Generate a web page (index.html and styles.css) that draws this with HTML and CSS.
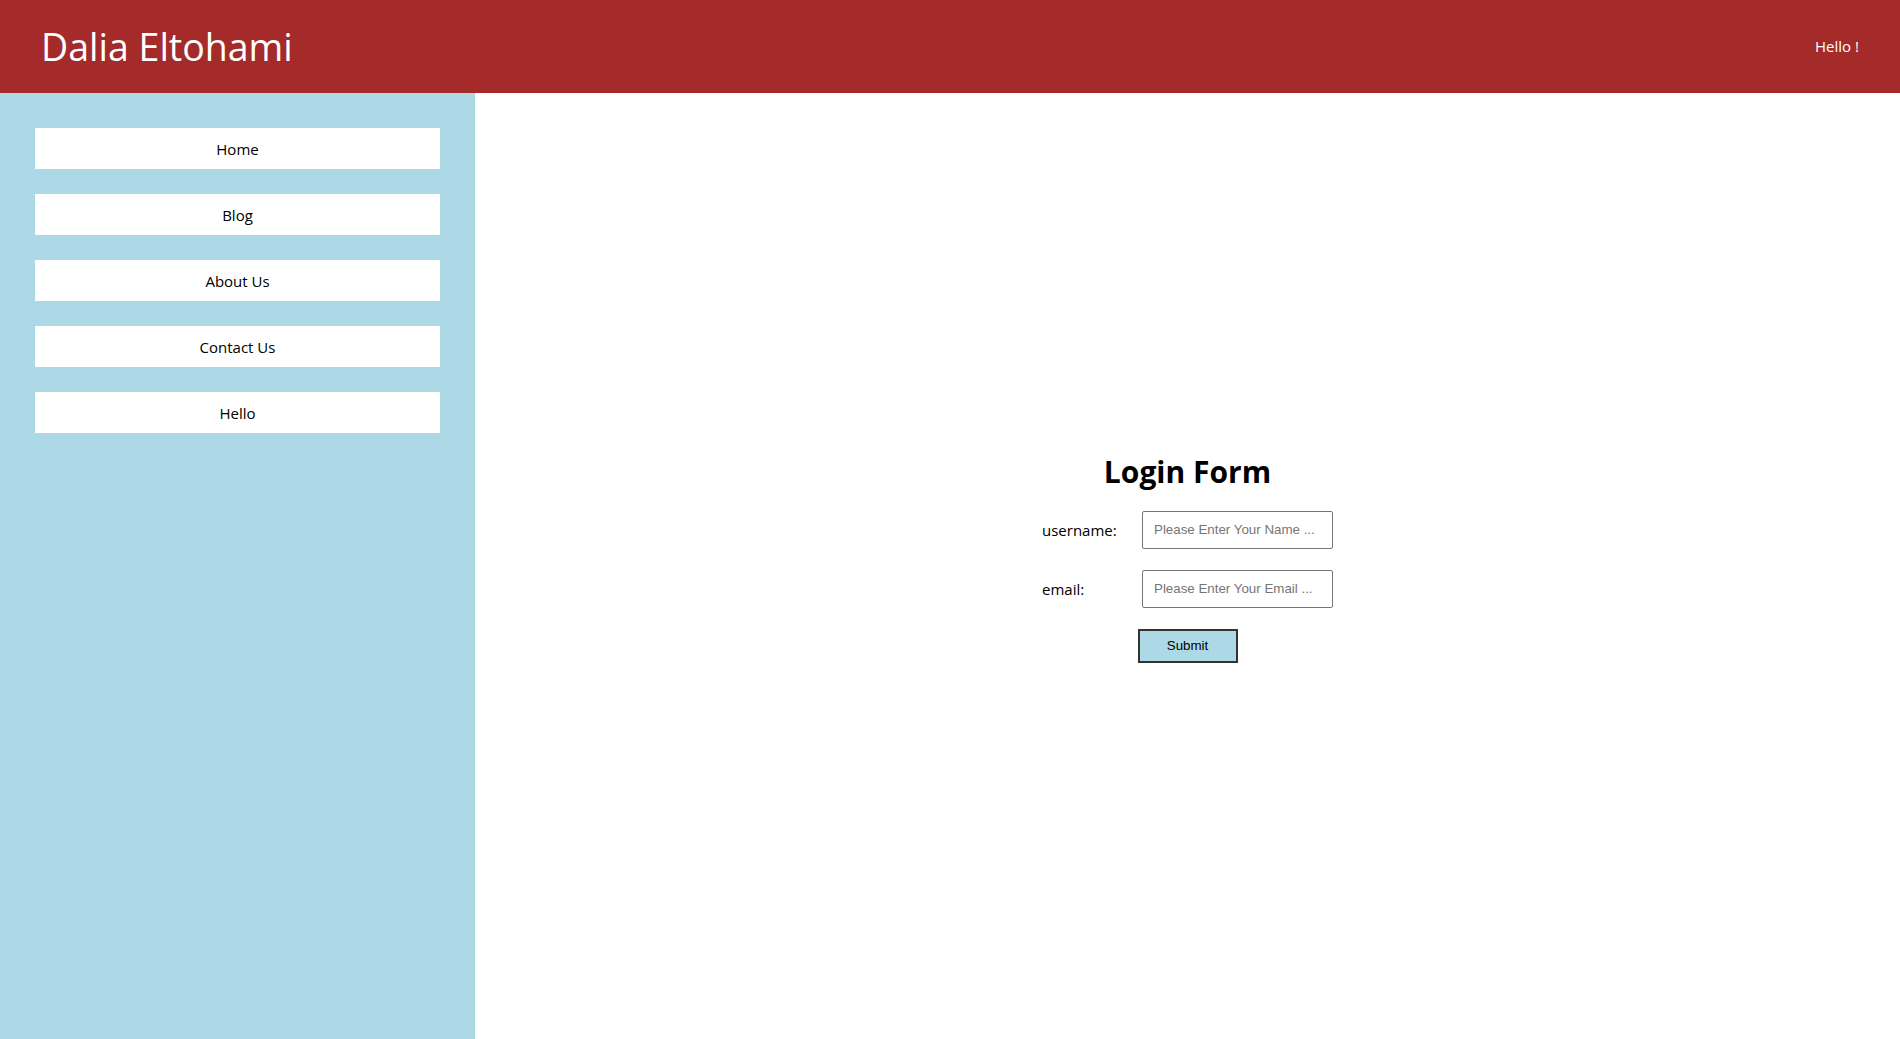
FILE: index.html
```html
<!DOCTYPE html>
<html>
<head>
<meta charset="utf-8">
<title>Dalia Eltohami</title>
<link rel="stylesheet" href="styles.css">
</head>
<body>
<header class="topbar">
  <div class="brand">Dalia Eltohami</div>
  <div class="greet">Hello !</div>
</header>
<div class="layout">
  <nav class="sidebar">
    <a class="nav-item" href="#">Home</a>
    <a class="nav-item" href="#">Blog</a>
    <a class="nav-item" href="#">About Us</a>
    <a class="nav-item" href="#">Contact Us</a>
    <a class="nav-item" href="#">Hello</a>
  </nav>
  <main class="content">
    <form class="login">
      <h1 class="login-title">Login Form</h1>
      <div class="fields">
        <label class="field-label" for="u">username:</label>
        <input class="field-input" id="u" type="text" placeholder="Please Enter Your Name ...">
        <label class="field-label" for="e">email:</label>
        <input class="field-input" id="e" type="text" placeholder="Please Enter Your Email ...">
      </div>
      <button class="submit" type="button">Submit</button>
    </form>
  </main>
</div>
</body>
</html>
```
FILE: styles.css
```css
html, body {
  margin: 0;
  padding: 0;
  height: 100%;
}
body {
  font-family: "Open Sans", "Noto Sans", sans-serif;
  display: flex;
  flex-direction: column;
  color: #000;
}
.topbar {
  height: 93px;
  flex: none;
  background: #a52a2a;
  color: #fff;
  display: flex;
  align-items: center;
  justify-content: space-between;
  padding: 0 41px 0 41px;
}
.brand {
  font-size: 37.5px;
  margin-top: -1px;
}
.greet {
  font-size: 15px;
  margin-top: -2px;
}
.layout {
  flex: 1;
  display: flex;
}
.sidebar {
  width: 475px;
  box-sizing: border-box;
  background: #add8e6;
  padding: 35px 35px 0 35px;
  display: flex;
  flex-direction: column;
  gap: 25px;
}
.nav-item {
  height: 41px;
  background: #fff;
  display: flex;
  align-items: center;
  justify-content: center;
  color: #000;
  text-decoration: none;
  font-size: 15px;
}
.content {
  flex: 1;
  display: flex;
  align-items: center;
  justify-content: center;
}
.login {
  display: flex;
  flex-direction: column;
  align-items: center;
  margin-bottom: 19px;
}
.login-title {
  font-size: 30px;
  font-weight: 700;
  margin: 0 0 19px 0;
}
.fields {
  display: grid;
  grid-template-columns: 100px 191px;
  grid-auto-rows: 38px;
  row-gap: 21px;
  align-items: center;
}
.field-label {
  font-size: 15px;
}
.field-input {
  height: 38px;
  box-sizing: border-box;
  border: 1px solid #767676;
  border-radius: 2px;
  padding: 0 11px;
  font-family: "Liberation Sans", Arial, sans-serif;
  font-size: 13.33px;
}
.field-input::placeholder {
  color: #757575;
}
.submit {
  margin-top: 21px;
  width: 100px;
  height: 34px;
  background: #add8e6;
  border: 2px solid #333;
  font-family: "Liberation Sans", Arial, sans-serif;
  font-size: 13.33px;
  color: #000;
}
```
